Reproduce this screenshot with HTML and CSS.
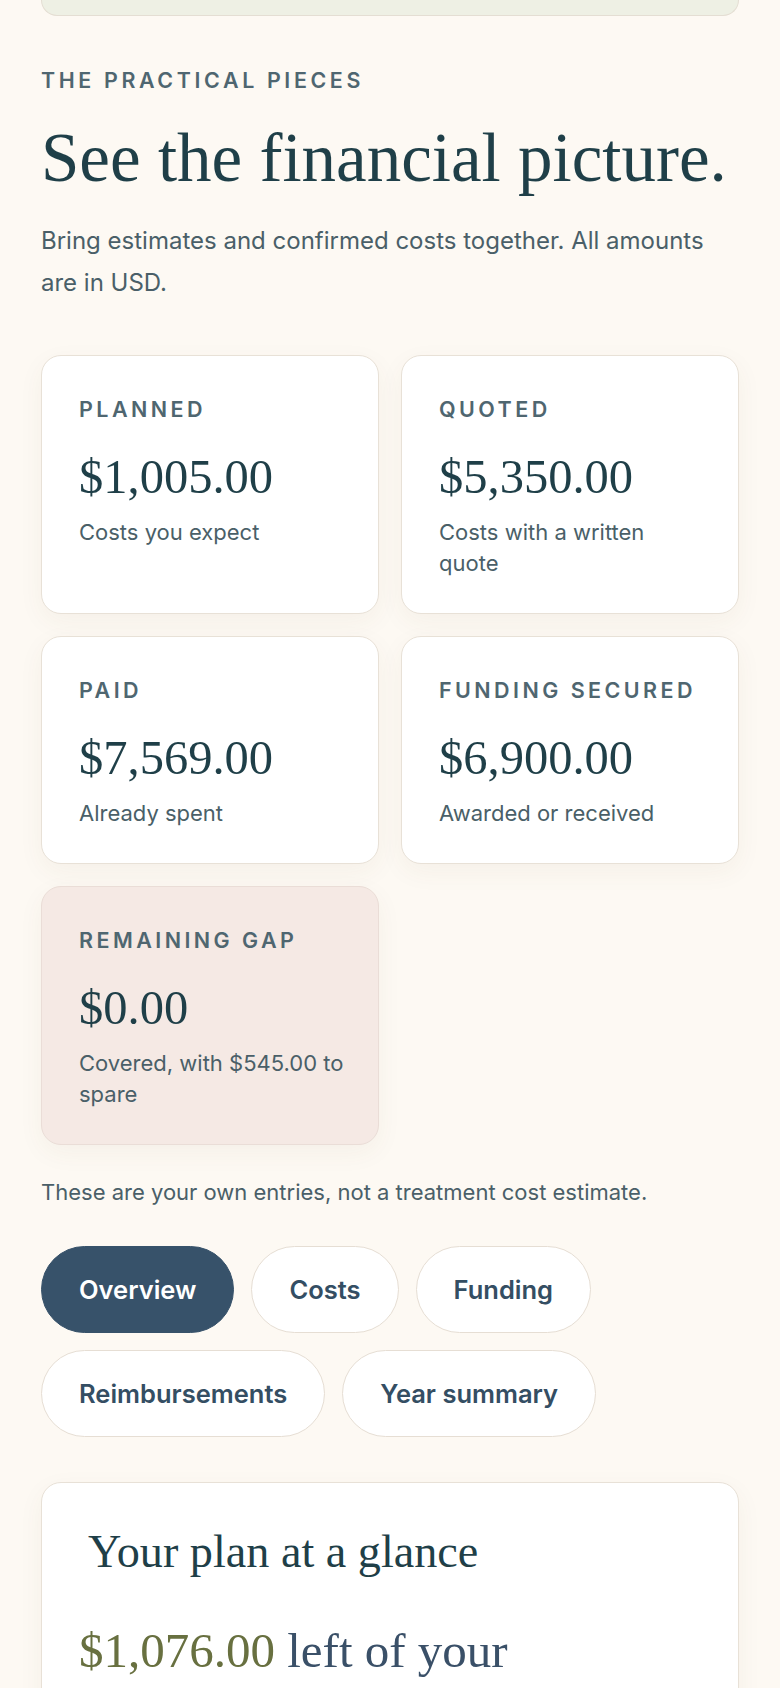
FILE: index.html
```html
<!DOCTYPE html>
<html lang="en">
<head>
<meta charset="utf-8">
<title>See the financial picture</title>
<link rel="stylesheet" href="styles.css">
</head>
<body>
<main class="page">
  <div class="prev-card"></div>

  <section class="finance">
    <p class="eyebrow">THE PRACTICAL PIECES</p>
    <h2 class="title">See the financial picture.</h2>
    <p class="lede">Bring estimates and confirmed costs together. All amounts are in USD.</p>

    <div class="stats">
      <div class="stat">
        <p class="stat-label">PLANNED</p>
        <p class="stat-value">$1,005.00</p>
        <p class="stat-note">Costs you expect</p>
      </div>
      <div class="stat">
        <p class="stat-label">QUOTED</p>
        <p class="stat-value">$5,350.00</p>
        <p class="stat-note">Costs with a written quote</p>
      </div>
      <div class="stat">
        <p class="stat-label">PAID</p>
        <p class="stat-value">$7,569.00</p>
        <p class="stat-note">Already spent</p>
      </div>
      <div class="stat">
        <p class="stat-label">FUNDING SECURED</p>
        <p class="stat-value">$6,900.00</p>
        <p class="stat-note">Awarded or received</p>
      </div>
      <div class="stat stat-gap">
        <p class="stat-label">REMAINING GAP</p>
        <p class="stat-value">$0.00</p>
        <p class="stat-note">Covered, with $545.00 to spare</p>
      </div>
    </div>

    <p class="footnote">These are your own entries, not a treatment cost estimate.</p>

    <nav class="tabs">
      <button class="tab tab-active">Overview</button>
      <button class="tab">Costs</button>
      <button class="tab">Funding</button>
      <button class="tab">Reimbursements</button>
      <button class="tab">Year summary</button>
    </nav>

    <div class="glance">
      <h3 class="glance-title">Your plan at a glance</h3>
      <p class="glance-lead"><span class="olive">$1,076.00</span> left of your $6,900.00 budget.</p>
    </div>
  </section>
</main>
</body>
</html>
```

FILE: styles.css
```css
* { box-sizing: border-box; }

html, body {
  margin: 0;
  padding: 0;
  background: #fdf9f3;
}

body {
  font-family: Inter, "Noto Sans", sans-serif;
  color: #4a5f68;
}

.page {
  padding: 0 41px;
}

.prev-card {
  height: 16px;
  background: #eef0e4;
  border: 1px solid #e4ded3;
  border-top: none;
  border-radius: 0 0 18px 18px;
}

.finance p { margin: 0; }

.finance .eyebrow {
  margin-top: 50px;
  font-size: 21.4px;
  line-height: 28px;
  font-weight: 600;
  letter-spacing: 0.17em;
  color: #4f6670;
}

.title {
  margin: 27px 0 0;
  font-family: "Liberation Serif", serif;
  font-weight: 400;
  font-size: 69px;
  line-height: 75px;
  color: #1f3f48;
}

.finance .lede {
  margin-top: 24px;
  max-width: 680px;
  font-size: 24px;
  line-height: 41.7px;
  color: #4a5f68;
}

.stats {
  margin-top: 52px;
  display: grid;
  grid-template-columns: 1fr 1fr;
  gap: 22px;
}

.stat {
  background: #ffffff;
  border: 1px solid #e8e1d7;
  border-radius: 20px;
  padding: 40px 33px 34.5px 37px;
  box-shadow: 0 8px 26px rgba(90, 70, 40, 0.05);
}

.stat-gap {
  background: #f5e9e4;
  border-color: #eaddd7;
}

.finance .stat-label {
  font-size: 21.5px;
  line-height: 26px;
  font-weight: 600;
  letter-spacing: 0.16em;
  color: #4f6670;
}

.finance .stat-value {
  margin-top: 26.5px;
  font-family: "Liberation Serif", serif;
  font-size: 48.5px;
  line-height: 56px;
  color: #1f3f48;
}

.finance .stat-note {
  margin-top: 12px;
  font-size: 22px;
  line-height: 31px;
  color: #4a5f68;
}

.finance .footnote {
  margin-top: 31.5px;
  font-size: 22px;
  line-height: 30px;
  color: #4a5f68;
}

.tabs {
  margin-top: 39px;
  display: flex;
  flex-wrap: wrap;
  gap: 17px;
}

.tab {
  height: 87px;
  padding: 0 37px;
  border: 1.5px solid #e6ded4;
  border-radius: 44px;
  background: #ffffff;
  font-family: Inter, "Noto Sans", sans-serif;
  font-size: 25.5px;
  font-weight: 600;
  color: #344e63;
  cursor: pointer;
}

.tab-active {
  background: #37526a;
  border-color: #37526a;
  color: #ffffff;
}

.glance {
  margin-top: 45px;
  background: #ffffff;
  border: 1px solid #e8e1d7;
  border-radius: 20px;
  padding: 42px 37px 40px;
  box-shadow: 0 8px 26px rgba(90, 70, 40, 0.05);
}

.glance-title {
  margin: 0;
  padding-left: 9px;
  font-family: "Liberation Serif", serif;
  font-weight: 400;
  font-size: 46.2px;
  line-height: 54px;
  color: #1f3f48;
}

.finance .glance-lead {
  margin-top: 40px;
  max-width: 560px;
  font-family: "Liberation Serif", serif;
  font-size: 49px;
  line-height: 64px;
  color: #3a5068;
}

.olive { color: #687040; }
```
